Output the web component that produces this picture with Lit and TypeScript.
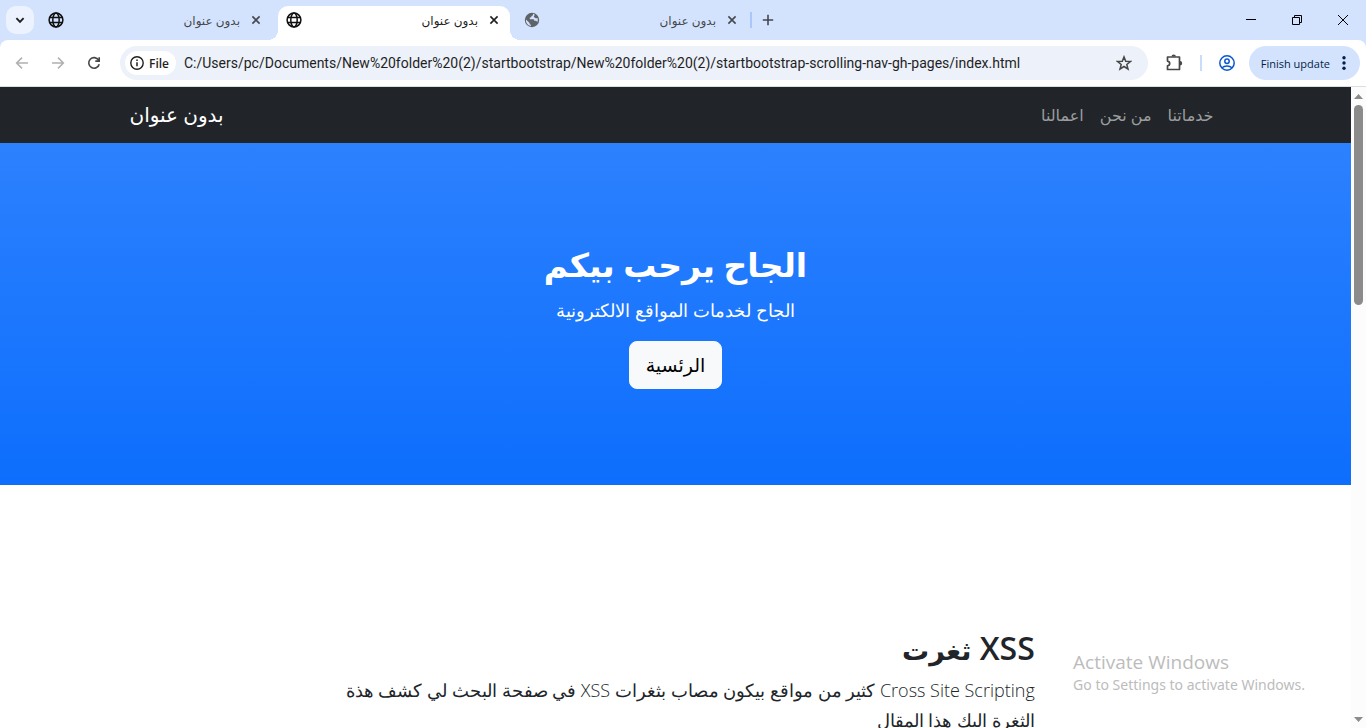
import { LitElement, html, svg, css } from "lit";
import { customElement, state } from "lit/decorators.js";

const globe = html`<svg class="icon16" viewBox="0 0 16 16" fill="none" stroke="#111" stroke-width="1.5" aria-hidden="true">
  <circle cx="8" cy="8" r="6.9" /><ellipse cx="8" cy="8" rx="3.2" ry="6.9" />
  <path d="M1.6 5.6h12.8M1.6 10.4h12.8" />
</svg>`;

const earth = html`<svg class="icon16" viewBox="0 0 16 16" aria-hidden="true">
  <circle cx="8" cy="8" r="7.2" fill="#5f6368" />
  <path d="M9 1.8C9.300 3 8.700 3.900 7.500 4.100C7.500 5.200 6.900 5.600 5.800 5.600V7.200H9.100C10 7.200 10.300 7.900 10.200 8.700H11.500C12.500 8.700 13 9.300 13.100 10.300C13.800 9.200 14 7.600 13.500 6C12.700 6.600 11.300 6.500 11 5.500C9.900 5.500 9.600 4.500 10.200 3.700C10.900 3.200 10.800 2.500 10 2ZM2 7.500L5.600 11.100V12.300C6.200 12.300 6.900 12.600 7 13.900C4 13.600 1.600 10.900 2 7.500Z" fill="#d3e3fd" />
</svg>`;

const cross = html`<svg class="icon16" viewBox="0 0 16 16" fill="none" stroke="currentColor" stroke-width="1.6" aria-hidden="true">
  <path d="M4.400 4.400l7.200 7.200M11.600 4.400l-7.200 7.200" />
</svg>`;

const stroked = (body: unknown, size = 16) => html`<svg
  width=${size} height=${size} viewBox="0 0 16 16" fill="none" stroke="currentColor" stroke-width="1.5" aria-hidden="true">${body}</svg>`;

interface Tab { title: string; icon: unknown; }

@customElement("browser-tabs")
export class BrowserTabs extends LitElement {
  @state() private active = 1;

  private tabs: Tab[] = [
    { title: "بدون عنوان", icon: globe },
    { title: "بدون عنوان", icon: globe },
    { title: "بدون عنوان", icon: earth },
  ];

  static styles = css`
    :host { display: flex; height: 40px; background: #d3e3fd; color: #1f1f1f; }
    button { border: 0; padding: 0; background: none; color: inherit; font: inherit; display: grid; place-items: center; }
    svg { display: block; }
    .icon16 { width: 16px; height: 16px; }
    .search { width: 28px; height: 28px; margin: 6px; border-radius: 10px; background: #ecf2fe; }
    .tabs { display: flex; gap: 6px; padding-top: 6px; }
    .tab { position: relative; box-sizing: border-box; width: 232px; display: flex; align-items: center; padding: 0 8px 6px; color: #45484d; }
    .tab.on { background: #fff; color: #1f1f1f; border-radius: 10px 10px 0 0; }
    .tab.on::before, .tab.on::after { content: ""; position: absolute; bottom: 0; width: 10px; height: 10px; }
    .tab.on::before { right: 100%; background: radial-gradient(circle at 0 0, transparent 10px, #fff 10px); }
    .tab.on::after { left: 100%; background: radial-gradient(circle at 100% 0, transparent 10px, #fff 10px); }
    .name { flex: 1; height: 28px; padding: 0 8px; display: block; text-align: right; font: 12px/30px "Open Sans", "DejaVu Sans", sans-serif; }
    .add { width: 32px; height: 28px; margin-top: 6px; color: #45484d; }
    .bar { width: 2px; height: 16px; margin: 12px 0 0 2px; background: #a8c7fa; }
    .win { margin-left: auto; display: flex; color: #000; }
    .win button { width: 46px; height: 40px; }
  `;

  render() {
    return html`
      <button class="search" aria-label="Search tabs">
        ${stroked(svg`<path d="M4.400 6.200L8 9.800l3.600-3.600" stroke-width="1.900"/>`)}
      </button>
      <div class="tabs">
        ${this.tabs.map((t, i) => html`
          <div class="tab ${i === this.active ? "on" : ""}">
            ${t.icon}
            <button class="name" dir="rtl" @click=${() => (this.active = i)}>${t.title}</button>
            <button aria-label="Close tab">${cross}</button>
          </div>`)}
      </div>
      <span class="bar"></span>
      <button class="add" aria-label="New tab">
        ${stroked(svg`<path d="M8 2.800v10.400M2.800 8h10.400" stroke-width="1.600"/>`)}
      </button>
      <div class="win">
        <button aria-label="Minimize">${stroked(svg`<path d="M3 7.500h10" stroke-width="1"/>`)}</button>
        <button aria-label="Restore">${stroked(svg`<path d="M3.500 5.500h7v7h-7zM5.500 5.500v-2h7v7h-2" stroke-width="1"/>`)}</button>
        <button aria-label="Close">${stroked(svg`<path d="M3 3l10 10M13 3L3 13" stroke-width="1"/>`)}</button>
      </div>
    `;
  }
}

@customElement("browser-toolbar")
export class BrowserToolbar extends LitElement {
  static styles = css`
    :host { display: block; background: #d3e3fd; font-family: "Open Sans", sans-serif; }
    .row { display: flex; align-items: center; height: 47px; box-sizing: border-box; padding: 0 6px 0 8px; background: #fff; border-bottom: 1px solid #dcdde0; border-radius: 8px 8px 0 0; color: #474747; }
    button { border: 0; padding: 0; background: none; color: inherit; font: inherit; display: grid; place-items: center; }
    svg { display: block; }
    .tool { width: 28px; height: 28px; margin-right: 8px; }
    .off { color: #b0b0b0; }
    .field { flex: 1; display: flex; align-items: center; height: 34px; margin-left: 4px; padding: 0 16px 0 5px; border-radius: 17px; background: #ecf1fa; }
    .chip { display: flex; align-items: center; gap: 4px; height: 24px; padding: 0 7px 0 4px; border-radius: 12px; background: #fff; color: #1f1f1f; font-size: 12px; font-weight: 600; }
    input { flex: 1; min-width: 0; border: 0; padding: 0 8px; outline: 0; background: none; color: #1f1f1f; font: 14px/20px Roboto, "Noto Sans", sans-serif; }
    .ext { margin: 0 16px; }
    .bar { width: 2px; height: 16px; background: #c9dcfb; }
    .me { margin: 0 14px 0 17px; color: #0b57d0; }
    .update { display: flex; gap: 6px; align-items: center; height: 34px; padding: 0 8px 0 12px; border-radius: 17px; background: #d3e3fd; color: #041e49; font-size: 11px; }
  `;

  render() {
    return html`<div class="row">
      <button class="tool off" aria-label="Back">${stroked(svg`<path d="M14 8H3M8 2.600L2.600 8 8 13.400"/>`)}</button>
      <button class="tool off" aria-label="Forward">${stroked(svg`<path d="M2 8h11M8 2.600L13.400 8 8 13.400"/>`)}</button>
      <button class="tool" aria-label="Reload">${stroked(svg`<path d="M12.600 5.200A5.300 5.300 0 1 0 13.200 9.200M13.200 2.200v3.900H9.300" stroke-width="1.600"/>`)}</button>
      <div class="field">
        <button class="chip">
          ${stroked(svg`<circle cx="8" cy="8" r="6.200" stroke-width="1.400"/><path d="M8 7.200v4M8 4.600v1.400"/>`)}
          File
        </button>
        <input aria-label="Address" dir="ltr" .value=${"C:/Users/pc/Documents/New%20folder%20(2)/startbootstrap/New%20folder%20(2)/startbootstrap-scrolling-nav-gh-pages/index.html"} />
        <button aria-label="Bookmark">
          ${stroked(svg`<path d="M8 1.900l1.700 4.300 4.700.3-3.600 3 1.200 4.500L8 11.500 4 14l1.200-4.500-3.600-3 4.700-.3z" stroke-width="1.500"/>`)}
        </button>
      </div>
      <button class="ext" aria-label="Extensions">
        <svg width="20" height="20" viewBox="0 0 20 20" fill="none" stroke="currentColor" stroke-width="1.700" aria-hidden="true">
          <path d="M3.500 4h12v12.500h-12v-3.600c1.600-.3 2.200-1.200 2.200-2.400s-.6-2.100-2.200-2.400z" stroke-linejoin="round" />
          <path d="M7.500 3.600a2.200 2.200 0 0 1 4.400 0zM16 8a2.200 2.200 0 0 1 0 4.400z" fill="currentColor" stroke="none" />
        </svg>
      </button>
      <span class="bar"></span>
      <button class="me" aria-label="Profile">
        ${stroked(svg`<circle cx="8" cy="8" r="7.200"/><circle cx="8" cy="6.300" r="2.200"/><path d="M3 12.800c2.500-2.300 7.500-2.300 10 0"/>`)}
      </button>
      <button class="update">Finish update
        <svg width="16" height="16" viewBox="0 0 16 16" fill="currentColor" aria-hidden="true"><circle cx="8" cy="2.700" r="1.700"/><circle cx="8" cy="8" r="1.700"/><circle cx="8" cy="13.300" r="1.700"/></svg>
      </button>
    </div>`;
  }
}

@customElement("site-page")
export class SitePage extends LitElement {
  private links = ["خدماتنا", "من نحن", "اعمالنا"];

  static styles = css`
    :host { display: block; background: #fff; color: #212529; font: 16px/24px "Open Sans", "Noto Sans", "DejaVu Sans", sans-serif; }
    a { text-decoration: none; }
    h1, h2, p { margin: 0; }
    .box { box-sizing: border-box; max-width: 1140px; margin: 0 auto; padding: 0 24px; }
    nav { background: #212529; }
    nav .box { display: flex; align-items: center; justify-content: space-between; height: 56px; }
    .brand { color: #fff; font-size: 20px; line-height: 30px; }
    ul { display: flex; margin: 0; padding: 0; list-style: none; }
    li a { display: block; padding: 8px; color: #9b9d9e; }
    .hero { padding: 96px 0; background: linear-gradient(180deg, #2c81fe, #0d6efd); color: #fff; text-align: center; }
    h1 { margin-bottom: 4px; font-size: 33px; line-height: 52px; font-weight: 700; }
    .lead { font-size: 18px; line-height: 30px; font-weight: 300; }
    .hero .lead { margin-bottom: 16px; }
    .btn { display: inline-block; vertical-align: top; padding: 8px 16px; border: 1px solid #f8f9fa; border-radius: 8px; background: #f8f9fa; color: #000; font-size: 19px; line-height: 30px; }
    section { padding: 144px 0; }
    .col { box-sizing: border-box; width: 68%; margin: 0 auto; padding: 0 12px; }
    h2 { margin-bottom: 8px; font-size: 32px; line-height: 38px; font-weight: 600; }
    h2 span { font-size: 27px; line-height: 27px; }
  `;

  render() {
    return html`
      <nav dir="ltr"><div class="box">
        <a class="brand" href="#top" dir="rtl">بدون عنوان</a>
        <ul dir="rtl">${this.links.map((l) => html`<li><a href="#about">${l}</a></li>`)}</ul>
      </div></nav>
      <header class="hero" dir="rtl">
        <h1>الجاح يرحب بيكم</h1>
        <p class="lead">الجاح لخدمات المواقع الالكترونية</p>
        <a class="btn" href="#about">الرئسية</a>
      </header>
      <section dir="rtl" id="about"><div class="box"><div class="col">
        <h2>XSS <span>ثغرت</span></h2>
        <p class="lead">Cross Site Scripting كثير من مواقع بيكون مصاب بثغرات XSS في صفحة البحث لي كشف هذة الثغرة اليك هذا المقال</p>
      </div></div></section>
    `;
  }
}

@customElement("app-root")
export class AppRoot extends LitElement {
  static styles = css`
    :host { display: flex; flex-direction: column; height: 100vh; position: relative; overflow: hidden; background: #fff; }
    .view { flex: 1; min-height: 0; display: flex; }
    site-page { flex: 1; min-width: 0; overflow: hidden; }
    .scroll { width: 15px; display: flex; flex-direction: column; align-items: center; background: #fcfcfc; }
    .scroll svg { display: block; flex: none; width: 15px; height: 18px; fill: #8b8b8b; }
    .track { flex: 1; }
    .thumb { width: 9px; height: 33%; border-radius: 5px; background: #8b8b8b; }
    .mark { position: absolute; right: 61px; bottom: 33px; color: #bcbcbc; font: 14px/20px "Noto Sans", "Open Sans", sans-serif; pointer-events: none; }
    .mark p { margin: 0; }
    .mark .big { font-family: "Open Sans", sans-serif; font-size: 19px; line-height: 26px; }
  `;

  render() {
    return html`
      <browser-tabs></browser-tabs>
      <browser-toolbar></browser-toolbar>
      <div class="view">
        <site-page></site-page>
        <div class="scroll">
          <svg viewBox="0 0 15 18" aria-hidden="true"><path d="M3 12l4.500-5 4.500 5z"/></svg>
          <div class="track"><div class="thumb"></div></div>
          <svg viewBox="0 0 15 18" aria-hidden="true"><path d="M3 7l4.500 5 4.500-5z"/></svg>
        </div>
      </div>
      <div class="mark"><p class="big">Activate Windows</p><p>Go to Settings to activate Windows.</p></div>
    `;
  }
}
